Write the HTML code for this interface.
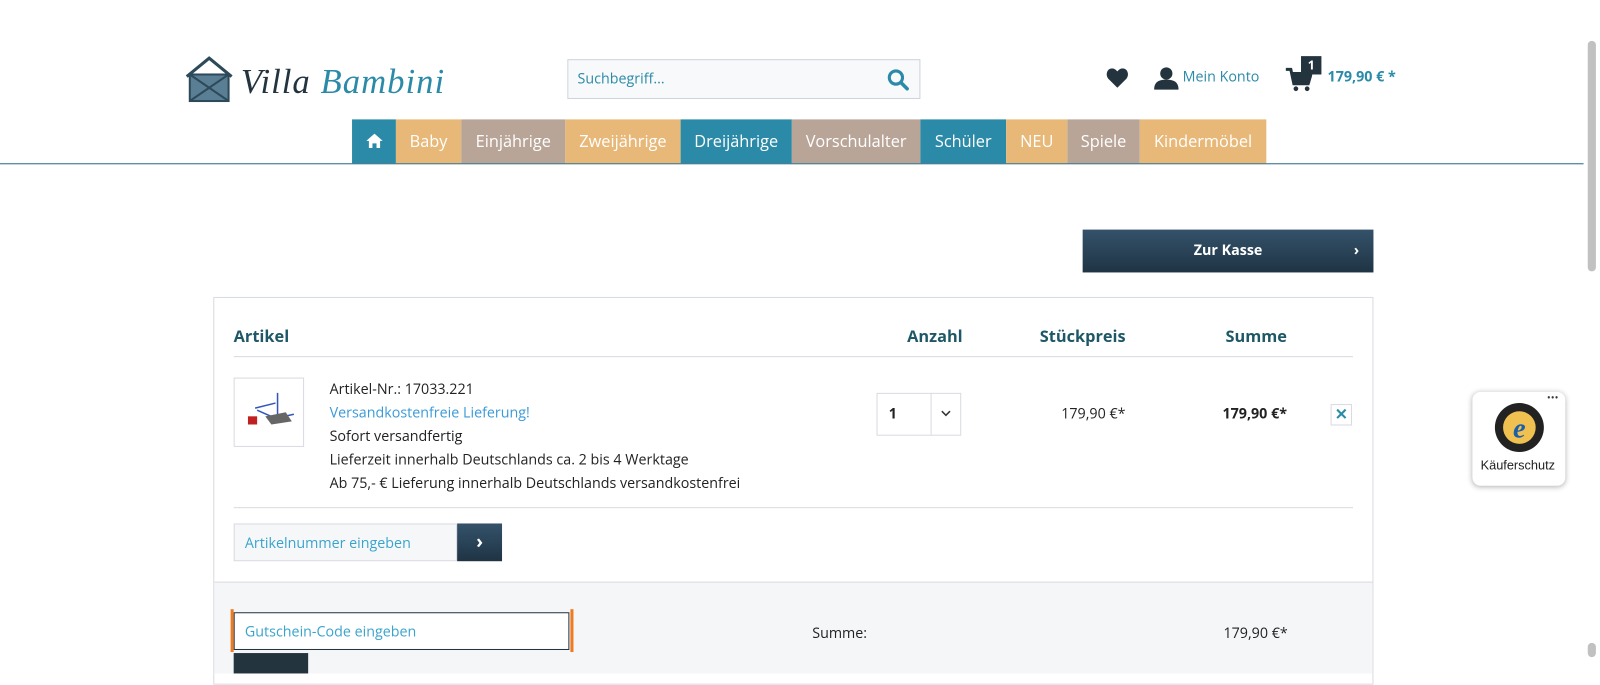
<!DOCTYPE html>
<html><head><meta charset="utf-8"><style>
*{margin:0;padding:0;box-sizing:border-box}
html,body{width:1600px;height:660px;overflow:hidden;background:#fff}
#w{position:absolute;left:0;top:0;width:1568px;height:647px;transform:scale(1.0204);transform-origin:0 0;font-family:"Open Sans","Liberation Sans",sans-serif;color:#222;font-size:14px}
.a{position:absolute}
.nav{position:absolute;top:117px;height:43px;color:#fff;font-size:16px;line-height:43px;text-align:center}
.t{background:#2a8aa8}.o{background:#e8b878}.g{background:#b8a598}
.hd{font-weight:bold;color:#1e5866;font-size:16px;top:318px}
.ln{line-height:23px;font-size:14px}
</style></head><body><div id="w">
<svg class="a" style="left:181px;top:55px" width="48" height="46" viewBox="0 0 48 46"><path d="M2 20 L24 2 L46 20" stroke="#2d4a5a" stroke-width="3" fill="none"/><rect x="5" y="18" width="38" height="26" fill="#5a7f95" stroke="#2d4a5a" stroke-width="2"/><path d="M5 18 L43 44 M43 18 L5 44" stroke="#2d4a5a" stroke-width="2"/></svg>
<div class="a" style="left:236px;top:62px;font-family:'Liberation Serif',serif;font-style:italic;font-size:34px;color:#23343f;letter-spacing:1px">Villa <span style="color:#2a8aa8">Bambini</span></div>
<div class="a" style="left:556px;top:58px;width:346px;height:39px;border:1px solid #cfd3dc;background:#f8f9fb"></div>
<div class="a" style="left:566px;top:68px;color:#2a8aa8;font-size:14px">Suchbegriff...</div>
<svg class="a" style="left:869px;top:67px" width="22" height="22" viewBox="0 0 22 22"><circle cx="9" cy="9" r="6.5" stroke="#2a8aa8" stroke-width="3" fill="none"/><path d="M14 14 L20 20" stroke="#2a8aa8" stroke-width="3.5" stroke-linecap="round"/></svg>
<svg class="a" style="left:1084px;top:67px" width="22" height="19" viewBox="0 0 22 19"><path d="M11 19 L2 10 C-1 6 1 0 6 0 C8.5 0 10 2 11 3 C12 2 13.5 0 16 0 C21 0 23 6 20 10 Z" fill="#23343f"/></svg>
<svg class="a" style="left:1131px;top:65px" width="24" height="23" viewBox="0 0 24 23"><circle cx="12" cy="7" r="6" fill="#23343f"/><path d="M0 23 C0 15 5 13 12 13 C19 13 24 15 24 23Z" fill="#23343f"/></svg>
<div class="a" style="left:1159px;top:66px;color:#2a8aa8;font-size:14px">Mein Konto</div>
<svg class="a" style="left:1260px;top:66px" width="26" height="24" viewBox="0 0 26 24"><path d="M0 2 H5 L8 16 H22 L25 6 H6" stroke="#23343f" stroke-width="3" fill="none"/><rect x="7" y="6" width="17" height="9" fill="#23343f"/><circle cx="10" cy="21" r="2.3" fill="#23343f"/><circle cx="21" cy="21" r="2.3" fill="#23343f"/></svg>
<div class="a" style="left:1275px;top:55px;width:20px;height:18px;background:#23343f;color:#fff;font-size:12px;font-weight:bold;text-align:center;line-height:18px">1</div>
<div class="a" style="left:1301px;top:66px;color:#2a8aa8;font-size:14px;font-weight:bold">179,90 € *</div>
<div class="nav t" style="left:345px;width:43px"><svg width="16" height="14" viewBox="0 0 16 14" style="vertical-align:-1px"><path d="M8 0 L16 7 H13.5 V14 H10 V9.5 H6 V14 H2.5 V7 H0Z" fill="#fff"/></svg></div>
<div class="nav o" style="left:388px;width:64px">Baby</div>
<div class="nav g" style="left:452px;width:102px">Einjährige</div>
<div class="nav o" style="left:554px;width:113px">Zweijährige</div>
<div class="nav t" style="left:667px;width:109px">Dreijährige</div>
<div class="nav g" style="left:776px;width:126px">Vorschulalter</div>
<div class="nav t" style="left:902px;width:84px">Schüler</div>
<div class="nav o" style="left:986px;width:60px">NEU</div>
<div class="nav g" style="left:1046px;width:71px">Spiele</div>
<div class="nav o" style="left:1117px;width:124px">Kindermöbel</div>
<div class="a" style="left:0;top:160px;width:1552px;height:1px;background:#2a6a80"></div>
<div class="a" style="left:1061px;top:225px;width:285px;height:42px;background:linear-gradient(#34526a,#1f3444);color:#fff;font-weight:bold;font-size:14px;line-height:42px;text-align:center">Zur Kasse<span style="position:absolute;right:14px">›</span></div>
<div class="a" style="left:209px;top:291px;width:1137px;height:380px;border:1px solid #d9dbe3"></div>
<div class="a hd" style="left:229px">Artikel</div>
<div class="a hd" style="left:889px">Anzahl</div>
<div class="a hd" style="left:1019px">Stückpreis</div>
<div class="a hd" style="left:1201px">Summe</div>
<div class="a" style="left:229px;top:349px;width:1097px;height:1px;background:#dadae2"></div>
<div class="a" style="left:229px;top:370px;width:69px;height:68px;border:1px solid #dadae2"></div>
<svg class="a" style="left:240px;top:380px" width="50" height="45" viewBox="0 0 50 45"><path d="M10 20 L30 15 M32 5 V28 M12 22 L30 30 L48 26" stroke="#3355bb" stroke-width="1.5" fill="none"/><path d="M20 28 L40 24 L46 33 L26 36Z" fill="#666"/><rect x="3" y="28" width="9" height="8" fill="#c02020"/></svg>
<div class="a ln" style="left:323px;top:370px">Artikel-Nr.: 17033.221<br><span style="color:#3a9ad8">Versandkostenfreie Lieferung!</span><br>Sofort versandfertig<br>Lieferzeit innerhalb Deutschlands ca. 2 bis 4 Werktage<br>Ab 75,- € Lieferung innerhalb Deutschlands versandkostenfrei</div>
<div class="a" style="left:859px;top:385px;width:83px;height:42px;border:1px solid #dadae2;background:#fff"></div>
<div class="a" style="left:912px;top:385px;width:1px;height:42px;background:#dadae2"></div>
<div class="a" style="left:871px;top:396px;font-weight:bold">1</div>
<svg class="a" style="left:921px;top:401px" width="12" height="8" viewBox="0 0 12 8"><path d="M2 2 L6 6 L10 2" stroke="#333" stroke-width="1.5" fill="none"/></svg>
<div class="a" style="left:1040px;top:396px">179,90 €*</div>
<div class="a" style="left:1198px;top:396px;font-weight:bold">179,90 €*</div>
<div class="a" style="left:1304px;top:396px;width:21px;height:21px;border:1px solid #dadae2;color:#2a8aa8;font-weight:bold;text-align:center;line-height:19px;font-size:15px">✕</div>
<div class="a" style="left:229px;top:497px;width:1097px;height:1px;background:#dadae2"></div>
<div class="a" style="left:229px;top:513px;width:219px;height:37px;border:1px solid #dadae2;background:#f6f7f9;color:#3aa3cc;padding:9px 10px;font-size:14px">Artikelnummer eingeben</div>
<div class="a" style="left:448px;top:513px;width:44px;height:37px;background:linear-gradient(#34526a,#1f3444);color:#fff;text-align:center;line-height:36px;font-size:18px;font-weight:bold">›</div>
<div class="a" style="left:210px;top:570px;width:1135px;height:90px;background:#f5f6f8;border-top:1px solid #dadae2"></div>
<div class="a" style="left:229px;top:640px;width:73px;height:20px;background:#23343f"></div>
<div class="a" style="left:226px;top:597px;width:8px;height:42px;border-left:3px solid #f07a20"></div>
<div class="a" style="left:554px;top:597px;width:8px;height:42px;border-right:3px solid #f07a20"></div>
<div class="a" style="left:229px;top:600px;width:329px;height:37px;border:1px solid #23343f;background:#fff;color:#3aa3cc;padding:9px 10px">Gutschein-Code eingeben</div>
<div class="a" style="left:796px;top:611px">Summe:</div>
<div class="a" style="left:1199px;top:611px">179,90 €*</div>
<div class="a" style="left:1443px;top:384px;width:91px;height:92px;background:#fff;border-radius:8px;box-shadow:0 1px 5px rgba(0,0,0,.3)"></div>
<div class="a" style="left:1516px;top:382px;font-size:10px;color:#333">•••</div>
<svg class="a" style="left:1464px;top:394px" width="50" height="50" viewBox="0 0 50 50"><circle cx="25" cy="25" r="24" fill="#222"/><circle cx="25" cy="25" r="16" fill="#f0c050"/><text x="25" y="35" text-anchor="middle" font-family="Liberation Serif" font-style="italic" font-weight="bold" font-size="28" fill="#1a5fa8">e</text></svg>
<div class="a" style="left:1451px;top:449px;font-family:'Liberation Sans',sans-serif;font-size:12.5px;color:#222">Käuferschutz</div>
<div class="a" style="left:1552px;top:0;width:16px;height:660px;background:#fff"></div>
<div class="a" style="left:1556px;top:40px;width:8px;height:226px;background:#c1c1c1;border-radius:4px"></div>
<div class="a" style="left:1556px;top:630px;width:8px;height:14px;background:#c1c1c1;border-radius:4px"></div>
</div></body></html>
